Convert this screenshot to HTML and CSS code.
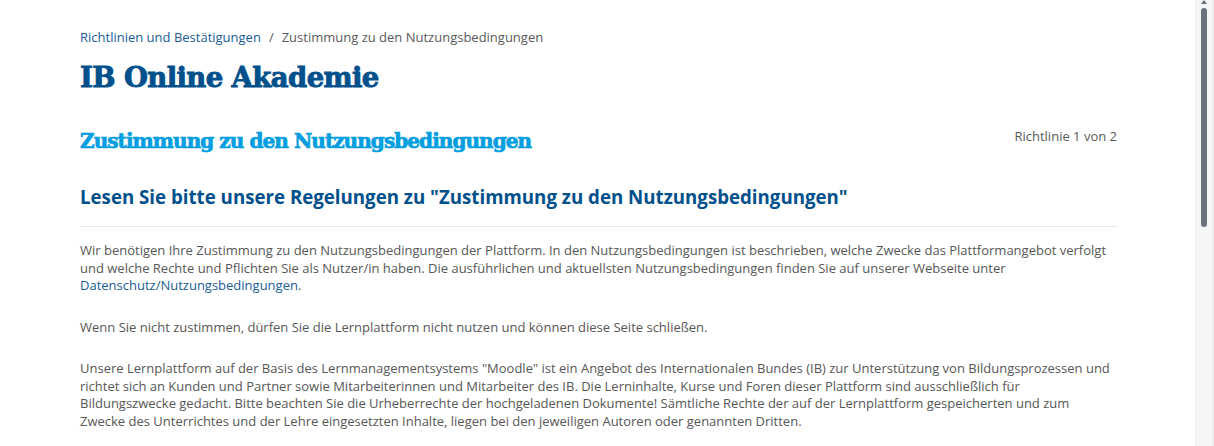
FILE: index.html
```html
<!DOCTYPE html>
<html lang="de">
<head>
<meta charset="utf-8">
<title>Zustimmung zu den Nutzungsbedingungen</title>
<link rel="stylesheet" href="styles.css">
</head>
<body>
<div class="page">
  <nav class="breadcrumb">
    <a href="#" class="crumb-link">Richtlinien und Bestätigungen</a>
    <span class="sep">/</span>
    <span class="crumb-current">Zustimmung zu den Nutzungsbedingungen</span>
  </nav>
  <h1 class="site-title">IB Online Akademie</h1>
  <div class="policy-head">
    <h2 class="policy-title">Zustimmung zu den Nutzungsbedingungen</h2>
    <span class="policy-count">Richtlinie 1 von 2</span>
  </div>
  <h3 class="policy-sub">Lesen Sie bitte unsere Regelungen zu "Zustimmung zu den Nutzungsbedingungen"</h3>
  <hr class="divider">
  <div class="policy-text">
    <p>Wir benötigen Ihre Zustimmung zu den Nutzungsbedingungen der Plattform. In den Nutzungsbedingungen ist beschrieben, welche Zwecke das Plattformangebot verfolgt und welche Rechte und Pflichten Sie als Nutzer/in haben. Die ausführlichen und aktuellsten Nutzungsbedingungen finden Sie auf unserer Webseite unter <a href="#">Datenschutz/Nutzungsbedingungen</a>.</p>
    <p>Wenn Sie nicht zustimmen, dürfen Sie die Lernplattform nicht nutzen und können diese Seite schließen.</p>
    <p>Unsere Lernplattform auf der Basis des Lernmanagementsystems "Moodle" ist ein Angebot des Internationalen Bundes (IB) zur Unterstützung von Bildungsprozessen und richtet sich an Kunden und Partner sowie Mitarbeiterinnen und Mitarbeiter des IB. Die Lerninhalte, Kurse und Foren dieser Plattform sind ausschließlich für Bildungszwecke gedacht. Bitte beachten Sie die Urheberrechte der hochgeladenen Dokumente! Sämtliche Rechte der auf der Lernplattform gespeicherten und zum Zwecke des Unterrichtes und der Lehre eingesetzten Inhalte, liegen bei den jeweiligen Autoren oder genannten Dritten.</p>
  </div>
</div>
<div class="scrollbar">
  <span class="scroll-arrow"></span>
  <span class="scroll-thumb"></span>
</div>
</body>
</html>
```
FILE: styles.css
```css
html, body {
  margin: 0;
  padding: 0;
  background: #ffffff;
  overflow: hidden;
}
body {
  font-family: "Open Sans", "Liberation Sans", sans-serif;
  font-size: 13px;
  color: #575757;
}
.page {
  width: 1037px;
  margin-left: 80px;
  padding-top: 28px;
}
.breadcrumb {
  display: flex;
  gap: 8px;
  font-size: 13px;
  line-height: 18px;
}
.crumb-link {
  color: #1a5c96;
  text-decoration: none;
}
.sep, .crumb-current {
  color: #5a5a5a;
}
.site-title {
  margin: 13px 0 0 0;
  font-family: "DejaVu Serif", "Liberation Serif", serif;
  font-weight: bold;
  font-size: 27.5px;
  line-height: 36px;
  color: #00508c;
  letter-spacing: -0.6px;
  -webkit-text-stroke: 0.9px #00508c;
}
.policy-head {
  display: flex;
  justify-content: space-between;
  align-items: center;
  margin-top: 31px;
}
.policy-title {
  margin: 0;
  font-family: "DejaVu Serif", "Liberation Serif", serif;
  font-weight: bold;
  font-size: 20px;
  line-height: 30px;
  color: #009ee0;
  letter-spacing: -0.93px;
  -webkit-text-stroke: 0.7px #009ee0;
}
.policy-count {
  font-size: 13px;
  color: #5a5a5a;
  padding-bottom: 10px;
}
.policy-sub {
  margin: 28px 0 0 0;
  font-size: 18.7px;
  line-height: 26px;
  font-weight: bold;
  color: #00508c;
}
.divider {
  border: 0;
  border-top: 1px solid #e6e6e6;
  margin: 16px 0 0 0;
}
.policy-text {
  padding-top: 15px;
}
.policy-text p {
  margin: 0 0 24px 0;
  line-height: 17.5px;
}
.policy-text a {
  color: #1a5c96;
  text-decoration: none;
}
.scrollbar {
  position: fixed;
  top: 0;
  right: 0;
  width: 16px;
  height: 446px;
  background: #f5f6f7;
  border-left: 1px solid #eceeef;
  border-right: 2px solid #ececec;
}
.scroll-arrow {
  position: absolute;
  top: 0;
  left: 5px;
  width: 0;
  height: 0;
  border-left: 3px solid transparent;
  border-right: 3px solid transparent;
  border-bottom: 4px solid #6a737b;
}
.scroll-thumb {
  position: absolute;
  top: 8px;
  left: 5px;
  width: 6px;
  height: 219px;
  border-radius: 3px;
  background: #6a737b;
}
```
